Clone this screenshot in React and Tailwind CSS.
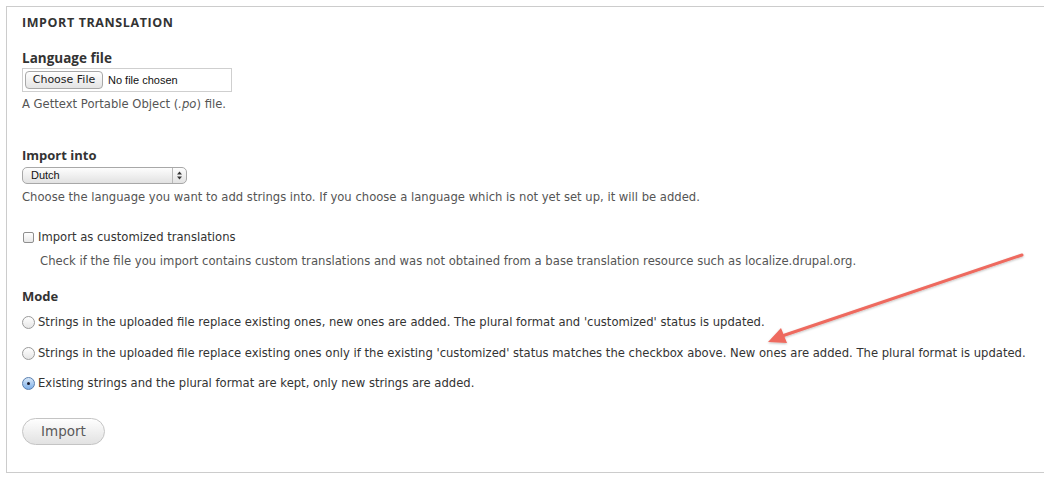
import React from "react";

const F = { fontFamily: '"DejaVu Sans", "Lucida Grande", Verdana, sans-serif' };
const B = { fontFamily: '"Open Sans", "Lucida Grande", sans-serif' };

function Radio({ checked }) {
  if (checked) {
    return (
      <span className="relative inline-block w-[13px] h-[13px] rounded-full border border-[#5a7fb0] bg-gradient-to-b from-[#d8e8f8] to-[#7fb0e8] shrink-0 mr-[3px]">
        <span className="absolute left-[4px] top-[4px] w-[3px] h-[3px] rounded-full bg-[#1a1a2a]" />
      </span>
    );
  }
  return (
    <span className="inline-block w-[13px] h-[13px] rounded-full border border-[#9a9a9a] bg-gradient-to-b from-[#ffffff] to-[#e6e6e6] shrink-0 mr-[3px]" />
  );
}

export default function App() {
  return (
    <div className="relative w-[1044px] h-[478px] overflow-hidden bg-white pt-[6px] pl-[6px]" style={F}>
      <div className="w-[1050px] border border-[#cccccc] pl-[15px] pb-[27px]">
        <div className="mt-[8px] h-[16px] leading-[16px] text-[12.5px] tracking-[0.6px] font-bold uppercase text-[#333]" style={B}>Import translation</div>

        <div className="mt-[18px] h-[18px] leading-[18px] text-[13.5px] font-bold text-[#333]" style={B}>Language file</div>
        <div className="mt-[1px] w-[210px] h-[24px] border border-[#cfcfcf] flex items-center pl-[2px]">
          <div className="h-[18px] w-[78px] rounded-[4px] border border-[#a8a8a8] bg-gradient-to-b from-[#ffffff] to-[#e4e4e4] flex items-center justify-center text-[11px] text-[#222]">
            Choose File
          </div>
          <span className="ml-[5px] text-[11px] text-[#111]" style={{ fontFamily: '"Liberation Sans", Arial, sans-serif' }}>No file chosen</span>
        </div>
        <div className="mt-[4px] h-[16px] leading-[16px] text-[11.6px] text-[#555]">
          A Gettext Portable Object (<em>.po</em>) file.
        </div>

        <div className="mt-[34px] h-[18px] leading-[18px] text-[13px] font-bold text-[#333]" style={B}>Import into</div>
        <div className="mt-[3px] w-[165px] h-[17px] rounded-[5px] border border-[#a8a8a8] bg-gradient-to-b from-[#fdfdfd] to-[#e2e2e2] flex items-center">
          <span className="ml-[8px] flex-1 text-[11px] text-[#111]" style={{ fontFamily: '"Liberation Sans", Arial, sans-serif' }}>Dutch</span>
          <span className="h-full w-[1px] bg-[#b8b8b8]" />
          <svg width="13" height="15" viewBox="0 0 13 15" className="shrink-0">
            <path d="M6.5 3.5 L9 6.5 L4 6.5 Z" fill="#333" />
            <path d="M6.5 11.5 L9 8.5 L4 8.5 Z" fill="#333" />
          </svg>
        </div>
        <div className="mt-[5px] h-[16px] leading-[16px] text-[11.6px] text-[#555]">
          Choose the language you want to add strings into. If you choose a language which is not yet set up, it will be added.
        </div>

        <div className="mt-[24px] h-[16px] leading-[16px] text-[11.6px] text-[#333] flex items-center">
          <span className="inline-block w-[11px] h-[11px] rounded-[2px] border border-[#8f8f8f] bg-gradient-to-b from-[#ffffff] to-[#e8e8e8] ml-[1px] mr-[4px] shrink-0" />
          Import as customized translations
        </div>
        <div className="mt-[8px] ml-[18px] h-[16px] leading-[16px] text-[11.65px] text-[#555]">
          Check if the file you import contains custom translations and was not obtained from a base translation resource such as localize.drupal.org.
        </div>

        <div className="mt-[18px] h-[18px] leading-[18px] text-[13px] font-bold text-[#333]" style={B}>Mode</div>
        <div className="mt-[9px] h-[16px] leading-[16px] text-[11.6px] text-[#333] flex items-center">
          <Radio />
          Strings in the uploaded file replace existing ones, new ones are added. The plural format and 'customized' status is updated.
        </div>
        <div className="mt-[15px] h-[16px] leading-[16px] text-[11.6px] text-[#333] flex items-center">
          <Radio />
          Strings in the uploaded file replace existing ones only if the existing 'customized' status matches the checkbox above. New ones are added. The plural format is updated.
        </div>
        <div className="mt-[14px] h-[16px] leading-[16px] text-[11.6px] text-[#333] flex items-center">
          <Radio checked />
          Existing strings and the plural format are kept, only new strings are added.
        </div>

        <div className="mt-[27px] w-[83px] h-[27px] rounded-full border border-[#c4c4c4] bg-gradient-to-b from-[#fefefe] to-[#e2e2e2] flex items-center justify-center text-[13.5px] text-[#5a5a5a]">
          Import
        </div>
      </div>

      <svg className="absolute left-0 top-0 pointer-events-none" width="1044" height="478" viewBox="0 0 1044 478">
        <defs>
          <filter id="sh" x="-10%" y="-10%" width="120%" height="120%">
            <feDropShadow dx="0" dy="1" stdDeviation="1" floodColor="#000" floodOpacity="0.25" />
          </filter>
        </defs>
        <g filter="url(#sh)">
          <line x1="1022" y1="255" x2="782" y2="336" stroke="#ee6a5f" strokeWidth="3" strokeLinecap="round" />
          <path d="M768 342 L781 328 L787 343 Z" fill="#ee6a5f" />
        </g>
      </svg>
    </div>
  );
}
